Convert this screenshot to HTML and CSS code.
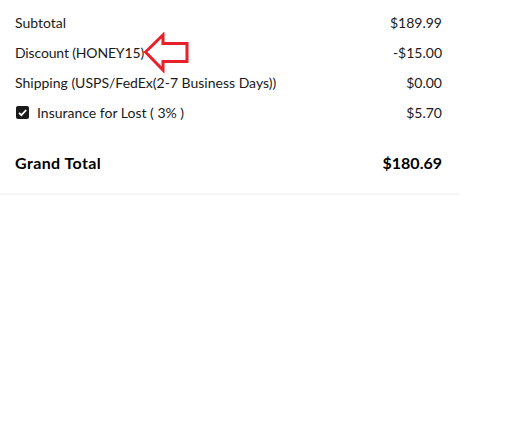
FILE: index.html
```html
<!DOCTYPE html>
<html>
<head>
<meta charset="utf-8">
<link rel="stylesheet" href="styles.css">
</head>
<body>
<div class="summary">
  <div class="row"><span>Subtotal</span><span>$189.99</span></div>
  <div class="row discount"><span class="label">Discount (HONEY15)<svg class="arrow" width="48" height="42" viewBox="0 0 48 42"><polygon points="3.5,20 21,3 21,11.5 45,11.5 45,29.5 21,29.5 21,38" fill="none" stroke="#e8202a" stroke-width="3" stroke-linejoin="miter"/></svg></span><span>-$15.00</span></div>
  <div class="row"><span>Shipping (USPS/FedEx(2-7 Business Days))</span><span>$0.00</span></div>
  <div class="row"><span class="check-label"><span class="checkbox"><svg width="13" height="13" viewBox="0 0 13 13"><path d="M3 6.8 L5.4 9.2 L10.2 4" fill="none" stroke="#fff" stroke-width="1.8"/></svg></span>Insurance for Lost ( 3% )</span><span>$5.70</span></div>
  <div class="row total"><span class="total-label">Grand Total</span><span>$180.69</span></div>
</div>
</body>
</html>
```
FILE: styles.css
```css
html, body {
  margin: 0;
  padding: 0;
  background: #fff;
}
body {
  font-family: "Lato", "Liberation Sans", sans-serif;
  color: #1a1a1a;
}
.summary {
  width: 427px;
  padding: 7px 17px 16px 15px;
  border-bottom: 2px solid #f4f4f4;
}
.row {
  display: flex;
  justify-content: space-between;
  align-items: center;
  height: 30px;
  font-size: 14px;
}
.label {
  position: relative;
  letter-spacing: -0.15px;
}
.arrow {
  position: absolute;
  left: calc(100% - 2px);
  top: -12px;
}
.check-label {
  display: flex;
  align-items: center;
}
.checkbox {
  display: inline-flex;
  width: 13px;
  height: 13px;
  background: #1a1a1a;
  border-radius: 2px;
  margin-left: 1px;
  margin-right: 8px;
}
.total {
  margin-top: 20px;
  font-size: 16px;
  font-weight: 700;
  color: #000;
}
.total-label {
  letter-spacing: 0.4px;
}
```
